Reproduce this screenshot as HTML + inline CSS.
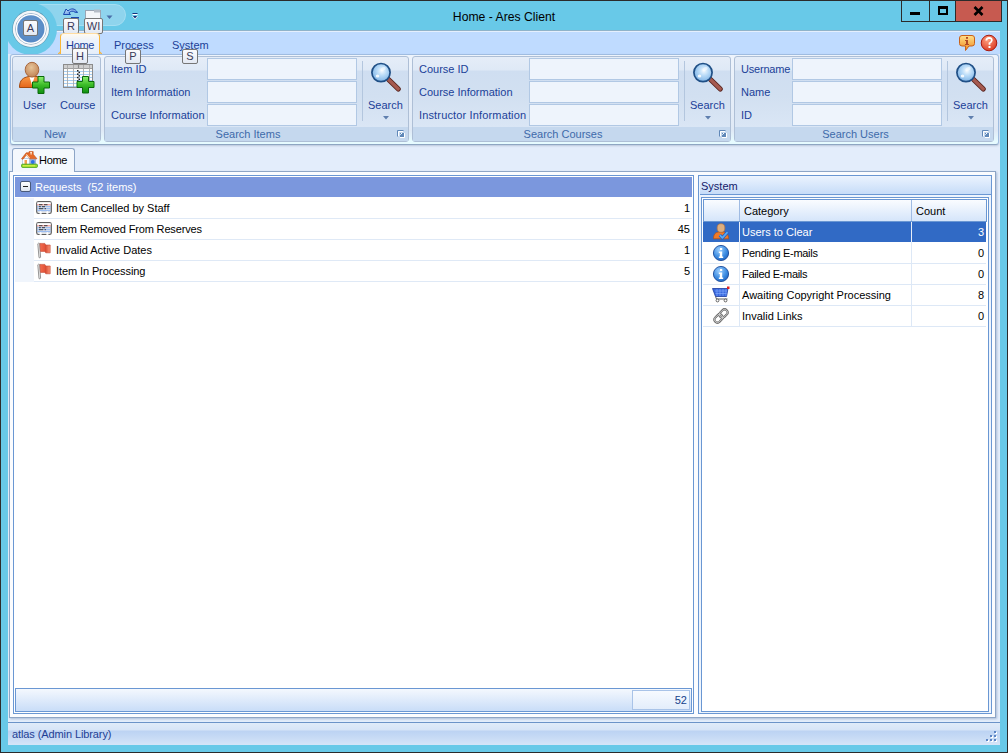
<!DOCTYPE html>
<html><head><meta charset="utf-8">
<style>
*{margin:0;padding:0;box-sizing:border-box}
html,body{width:1008px;height:753px;overflow:hidden;background:#2b2b2b;font-family:"Liberation Sans",sans-serif;font-size:11px;color:#000}
.a{position:absolute}
#frame{left:1px;top:1px;width:1006px;height:751px;background:#68c9e8}
#client{left:8px;top:30px;width:992px;height:715px;background:#e3edfb}
#tabstrip{left:8px;top:30px;width:992px;height:24px;background:#bfdbff;border-top:1px solid #8fb3c9;}
#tabstrip:before{content:"";position:absolute;left:0;top:0;width:100%;height:1px;background:#e4effd}
#ribbon{left:10px;top:54px;width:989px;height:91px;border:1px solid #9fbce0;border-bottom-color:#8ea6c2;border-radius:3px;background:linear-gradient(#eef4fc,#dfe9f6 85%,#e6fbff 97%);box-shadow:0 1px 2px rgba(110,130,160,.35)}
.grp{position:absolute;top:56px;height:86px;border:1px solid #aebfd6;border-radius:3px;background:linear-gradient(#e5edf8 0,#dfe9f6 13px,#cfdef1 14px,#d2e0f1 40px,#dae6f5 70px)}
.cap{position:absolute;left:0;right:0;bottom:0;height:14px;padding-right:17px;background:#c5d8ee;color:#3e6aaa;text-align:center;font-size:11px;line-height:15px}
.rt{position:absolute;color:#1b3f98;font-size:11px;white-space:nowrap}
.tb{position:absolute;height:22px;background:#eef4fc;border:1px solid #b1c8e4}
.tt{position:absolute;color:#1b3f98;font-size:11px}
.key{position:absolute;height:15px;border:1px solid #767676;border-radius:2px;background:linear-gradient(#fbfbfd,#e3e9f3);color:#3a3a58;font-size:11px;text-align:center;line-height:13px}

.doc{position:absolute;left:9px;top:171px;width:987px;height:547px;background:#fbfcfe;border:1px solid #8da5c6;box-shadow:1px 1px 2px rgba(90,115,160,0.4)}
.lt{position:absolute;font-size:11px;color:#000;white-space:nowrap}
.row{position:absolute;left:34px;width:658px;height:21px;border-bottom:1px solid #dfe9f6;background:#fff}
.num{position:absolute;font-size:11px;color:#000;text-align:right;white-space:nowrap}
.gr{position:absolute;left:703px;width:283px;height:21px;border-bottom:1px solid #dde8f6;background:#fff}
</style></head><body>
<div id="frame" class="a"></div>
<div id="client" class="a"></div>
<div id="tabstrip" class="a"></div>
<!-- title -->
<div class="a" style="left:404px;top:10px;width:200px;text-align:center;font-size:12.2px;color:#000">Home - Ares Client</div>
<!-- window buttons -->
<div class="a" style="left:901px;top:1px;width:101px;height:21px;border:1px solid #2b2b2b;border-top:none;background:#68c9e8"></div>
<div class="a" style="left:929px;top:1px;width:1px;height:21px;background:#2b2b2b"></div>
<div class="a" style="left:955px;top:1px;width:47px;height:21px;border:1px solid #2b2b2b;border-top:none;background:#c75a50"></div>
<div class="a" style="left:910px;top:12px;width:10px;height:3px;background:#000"></div>
<div class="a" style="left:938px;top:6px;width:10px;height:9px;border:2px solid #000;border-top-width:3px"></div>
<svg class="a" style="left:973px;top:6px" width="11" height="10" viewBox="0 0 11 10"><path d="M1.5 1 L9.5 9 M9.5 1 L1.5 9" stroke="#000" stroke-width="2.6"/></svg>

<!-- QAT -->
<div class="a" style="left:30px;top:4px;width:96px;height:22px;border-radius:11px;background:#8fd4ed;border:1px solid #a4def2"></div>
<div class="a" style="left:5px;top:3px;width:52px;height:52px;border-radius:50%;background:#68c9e8"></div>
<!-- orb -->
<svg class="a" style="left:0;top:0" width="62" height="60" viewBox="0 0 62 60">
<defs><radialGradient id="orbg" cx="0.5" cy="0.4" r="0.6"><stop offset="0" stop-color="#6a9ad0"/><stop offset="1" stop-color="#5588c4"/></radialGradient></defs>
<circle cx="30.9" cy="28.9" r="18.7" fill="rgba(70,90,110,0.45)"/>
<circle cx="30.9" cy="28.9" r="18.1" fill="#f3f6f9"/>
<circle cx="30.9" cy="28.9" r="15.4" fill="none" stroke="#9fb5cc" stroke-width="1"/>
<circle cx="30.9" cy="28.9" r="14.3" fill="none" stroke="#ffffff" stroke-width="1.2"/>
<circle cx="30.9" cy="28.9" r="13.6" fill="url(#orbg)"/>
</svg>
<div class="key" style="left:23px;top:20px;width:15px;height:16px;line-height:15px;font-size:11px">A</div>
<!-- undo icon -->
<svg class="a" style="left:62px;top:6px" width="18" height="14" viewBox="0 0 18 14">
<defs><linearGradient id="ug" x1="0" y1="0" x2="1" y2="1"><stop offset="0" stop-color="#d8ecff"/><stop offset="1" stop-color="#3a7ad8"/></linearGradient></defs>
<path d="M1.5 8.5 L4 3 L6 5 C9 2 13 2 15.5 6.5 L13 6.2 C11 4.5 8.5 5 7 6.8 L8.5 8.5 Z" fill="url(#ug)" stroke="#1a48b0" stroke-width="1"/>
<rect x="9" y="11" width="8" height="1.6" fill="#1a48b0"/>
</svg>
<!-- save/folder icon -->
<svg class="a" style="left:85px;top:9px" width="17" height="11" viewBox="0 0 17 11"><rect x="0.5" y="1.5" width="15" height="9" fill="#f4f6f9" stroke="#9aa6b5"/><rect x="9" y="0.5" width="6" height="3" fill="#b5bcc6"/></svg>
<svg class="a" style="left:106px;top:15px" width="7" height="5" viewBox="0 0 7 5"><path d="M0.5 0.5 L6.5 0.5 L3.5 4 Z" fill="#4a6ea8"/></svg>
<svg class="a" style="left:132px;top:12px" width="7" height="9" viewBox="0 0 7 9"><rect x="0.5" y="1" width="5" height="1" fill="#14317a"/><rect x="0.5" y="2" width="5" height="1" fill="#fff"/><path d="M0 4 H6 L3 7.5 Z" fill="#fff"/><path d="M0.8 4 H5.2 L3 6.5 Z" fill="#14317a"/></svg>
<div class="key" style="left:63px;top:18px;width:16px;height:16px;line-height:15px;font-size:11px">R</div>
<div class="key" style="left:84px;top:18px;width:19px;height:16px;line-height:15px;font-size:11px">WI</div>
<!-- tabs -->
<div class="a" style="left:60px;top:33px;width:40px;height:21px;border:1px solid #fbb638;border-top-color:#ffdca0;border-bottom:none;border-radius:4px 4px 0 0;background:linear-gradient(#fffaf0,#eef3fb 30%,#e6eef9)"></div>
<div class="a" style="left:58px;top:51px;width:3px;height:3px;border-right:1px solid #fbb638;border-bottom:1px solid #fbb638;border-radius:0 0 3px 0"></div>
<div class="a" style="left:99px;top:51px;width:3px;height:3px;border-left:1px solid #fbb638;border-bottom:1px solid #fbb638;border-radius:0 0 0 3px"></div>
<div class="tt" style="left:66px;top:39px;letter-spacing:-0.3px">Home</div>
<div class="tt" style="left:114px;top:39px">Process</div>
<div class="tt" style="left:172px;top:39px">System</div>
<!-- ribbon -->
<div id="ribbon" class="a"></div>
<div class="grp" style="left:12px;width:89px"><div class="cap" style="padding-right:3px">New</div></div>
<div class="grp" style="left:104px;width:305px"><div class="cap">Search Items</div></div>
<div class="grp" style="left:412px;width:319px"><div class="cap">Search Courses</div></div>
<div class="grp" style="left:734px;width:260px"><div class="cap">Search Users</div></div>
<div class="rt" style="left:23px;top:99px">User</div>
<div class="rt" style="left:60px;top:99px">Course</div>
<div class="rt" style="left:111px;top:63px">Item ID</div>
<div class="rt" style="left:111px;top:86px">Item Information</div>
<div class="rt" style="left:111px;top:109px">Course Information</div>
<div class="tb" style="left:207px;top:58px;width:150px"></div>
<div class="tb" style="left:207px;top:81px;width:150px"></div>
<div class="tb" style="left:207px;top:104px;width:150px"></div>

<div class="rt" style="left:419px;top:63px">Course ID</div>
<div class="rt" style="left:419px;top:86px">Course Information</div>
<div class="rt" style="left:419px;top:109px;letter-spacing:0.15px">Instructor Information</div>
<div class="tb" style="left:529px;top:58px;width:150px"></div>
<div class="tb" style="left:529px;top:81px;width:150px"></div>
<div class="tb" style="left:529px;top:104px;width:150px"></div>

<div class="rt" style="left:741px;top:63px;letter-spacing:-0.2px">Username</div>
<div class="rt" style="left:741px;top:86px">Name</div>
<div class="rt" style="left:741px;top:109px">ID</div>
<div class="tb" style="left:792px;top:58px;width:150px"></div>
<div class="tb" style="left:792px;top:81px;width:150px"></div>
<div class="tb" style="left:792px;top:104px;width:150px"></div>



<div class="a" style="left:362px;top:61px;width:1px;height:60px;background:#b3c6de"></div>
<svg class="a" style="left:370px;top:61px" width="34" height="34" viewBox="0 0 34 34">
<defs><radialGradient id="lg362" cx="0.55" cy="0.4" r="0.75"><stop offset="0" stop-color="#f4faff"/><stop offset="0.35" stop-color="#b9dbf8"/><stop offset="0.8" stop-color="#7fb4e6"/><stop offset="1" stop-color="#5f98d6"/></radialGradient></defs>
<line x1="18.5" y1="18.5" x2="28.3" y2="28" stroke="#5a2620" stroke-width="5.2" stroke-linecap="round"/>
<line x1="18.5" y1="18.5" x2="28.3" y2="28" stroke="#a65a50" stroke-width="3.2" stroke-linecap="round"/>
<circle cx="11" cy="11.6" r="9.1" fill="url(#lg362)" stroke="#1f4f86" stroke-width="1.7"/>
<ellipse cx="7.5" cy="15" rx="1.8" ry="1.5" fill="#fff" opacity="0.85"/>
<ellipse cx="13" cy="8" rx="3" ry="1.8" fill="#fff" opacity="0.5" transform="rotate(-30 13 8)"/>
</svg>
<div class="rt" style="left:368px;top:99px">Search</div>
<svg class="a" style="left:383px;top:116px" width="6" height="4" viewBox="0 0 6 4"><path d="M0 0 L6 0 L3 3.5 Z" fill="#5f7fae"/></svg>

<div class="a" style="left:684px;top:61px;width:1px;height:60px;background:#b3c6de"></div>
<svg class="a" style="left:692px;top:61px" width="34" height="34" viewBox="0 0 34 34">
<defs><radialGradient id="lg684" cx="0.55" cy="0.4" r="0.75"><stop offset="0" stop-color="#f4faff"/><stop offset="0.35" stop-color="#b9dbf8"/><stop offset="0.8" stop-color="#7fb4e6"/><stop offset="1" stop-color="#5f98d6"/></radialGradient></defs>
<line x1="18.5" y1="18.5" x2="28.3" y2="28" stroke="#5a2620" stroke-width="5.2" stroke-linecap="round"/>
<line x1="18.5" y1="18.5" x2="28.3" y2="28" stroke="#a65a50" stroke-width="3.2" stroke-linecap="round"/>
<circle cx="11" cy="11.6" r="9.1" fill="url(#lg684)" stroke="#1f4f86" stroke-width="1.7"/>
<ellipse cx="7.5" cy="15" rx="1.8" ry="1.5" fill="#fff" opacity="0.85"/>
<ellipse cx="13" cy="8" rx="3" ry="1.8" fill="#fff" opacity="0.5" transform="rotate(-30 13 8)"/>
</svg>
<div class="rt" style="left:690px;top:99px">Search</div>
<svg class="a" style="left:705px;top:116px" width="6" height="4" viewBox="0 0 6 4"><path d="M0 0 L6 0 L3 3.5 Z" fill="#5f7fae"/></svg>

<div class="a" style="left:947px;top:61px;width:1px;height:60px;background:#b3c6de"></div>
<svg class="a" style="left:955px;top:61px" width="34" height="34" viewBox="0 0 34 34">
<defs><radialGradient id="lg947" cx="0.55" cy="0.4" r="0.75"><stop offset="0" stop-color="#f4faff"/><stop offset="0.35" stop-color="#b9dbf8"/><stop offset="0.8" stop-color="#7fb4e6"/><stop offset="1" stop-color="#5f98d6"/></radialGradient></defs>
<line x1="18.5" y1="18.5" x2="28.3" y2="28" stroke="#5a2620" stroke-width="5.2" stroke-linecap="round"/>
<line x1="18.5" y1="18.5" x2="28.3" y2="28" stroke="#a65a50" stroke-width="3.2" stroke-linecap="round"/>
<circle cx="11" cy="11.6" r="9.1" fill="url(#lg947)" stroke="#1f4f86" stroke-width="1.7"/>
<ellipse cx="7.5" cy="15" rx="1.8" ry="1.5" fill="#fff" opacity="0.85"/>
<ellipse cx="13" cy="8" rx="3" ry="1.8" fill="#fff" opacity="0.5" transform="rotate(-30 13 8)"/>
</svg>
<div class="rt" style="left:953px;top:99px">Search</div>
<svg class="a" style="left:968px;top:116px" width="6" height="4" viewBox="0 0 6 4"><path d="M0 0 L6 0 L3 3.5 Z" fill="#5f7fae"/></svg>
<svg class="a" style="left:397px;top:130px" width="10" height="10" viewBox="0 0 10 10"><path d="M0.5 6.5 V0.5 H6.5" fill="none" stroke="#6088b8"/><path d="M1.5 6 V1.5 H6" fill="none" stroke="#fff"/><rect x="3" y="3" width="4" height="4" fill="#6088b8"/><rect x="4" y="3" width="1" height="1" fill="#fff"/><rect x="3" y="4" width="1" height="1" fill="#c8dcf0"/><path d="M7.5 3 V7.5 H3" fill="none" stroke="#fff"/></svg><svg class="a" style="left:719px;top:130px" width="10" height="10" viewBox="0 0 10 10"><path d="M0.5 6.5 V0.5 H6.5" fill="none" stroke="#6088b8"/><path d="M1.5 6 V1.5 H6" fill="none" stroke="#fff"/><rect x="3" y="3" width="4" height="4" fill="#6088b8"/><rect x="4" y="3" width="1" height="1" fill="#fff"/><rect x="3" y="4" width="1" height="1" fill="#c8dcf0"/><path d="M7.5 3 V7.5 H3" fill="none" stroke="#fff"/></svg><svg class="a" style="left:982px;top:130px" width="10" height="10" viewBox="0 0 10 10"><path d="M0.5 6.5 V0.5 H6.5" fill="none" stroke="#6088b8"/><path d="M1.5 6 V1.5 H6" fill="none" stroke="#fff"/><rect x="3" y="3" width="4" height="4" fill="#6088b8"/><rect x="4" y="3" width="1" height="1" fill="#fff"/><rect x="3" y="4" width="1" height="1" fill="#c8dcf0"/><path d="M7.5 3 V7.5 H3" fill="none" stroke="#fff"/></svg>
<!-- user icon -->
<svg class="a" style="left:18px;top:61px" width="34" height="33" viewBox="0 0 34 33">
<defs><radialGradient id="hd" cx="0.45" cy="0.35" r="0.7"><stop offset="0" stop-color="#e6c49a"/><stop offset="1" stop-color="#c08050"/></radialGradient>
<linearGradient id="bd" x1="0" y1="0" x2="0" y2="1"><stop offset="0" stop-color="#f89a48"/><stop offset="1" stop-color="#e5661a"/></linearGradient>
<linearGradient id="gp" x1="0" y1="0" x2="0" y2="1"><stop offset="0" stop-color="#8ef070"/><stop offset="0.5" stop-color="#3cbc28"/><stop offset="1" stop-color="#0e9010"/></linearGradient></defs>
<path d="M1.5 26.5 C1.5 19 5 16.5 11 15.5 L19 15.5 C23 17 24 20 24 26.5 Z" fill="url(#bd)" stroke="#a54a10" stroke-width="1"/>
<path d="M11.5 16 L14 24 L16.5 16 Z" fill="#fff"/>
<ellipse cx="14" cy="8.7" rx="6.8" ry="7.4" fill="url(#hd)" stroke="#a86840" stroke-width="1"/>
<path d="M20 15.5 h6 v5.5 h5.5 v6 h-5.5 v5.5 h-6 v-5.5 h-5.5 v-6 h5.5 Z" fill="url(#gp)" stroke="#0a6a0a" stroke-width="1"/>
</svg>
<!-- course icon -->
<svg class="a" style="left:63px;top:64px" width="32" height="30" viewBox="0 0 32 30">
<rect x="0.5" y="0.5" width="29" height="23" fill="#fdfcfa" stroke="#8c8c8c"/>
<rect x="1" y="1" width="28" height="3.2" fill="#cfcfcf"/>
<path d="M1 4.5 H29" stroke="#8a8a8a" stroke-width="0.8"/>
<path d="M1 7.5 H29 M1 10.5 H29 M1 13.5 H29 M1 16.5 H29 M1 19.5 H29 M1 22.5 H29" stroke="#9cc8f0" stroke-width="0.9"/>
<path d="M4.5 1 V23 M10.5 1 V23 M20.5 1 V23 M26.5 1 V23" stroke="#a8a8a8" stroke-width="0.9"/>
<path d="M15.5 1 V4" stroke="#8a8a8a" stroke-width="1.2"/>
<rect x="14" y="6.0" width="1.5" height="1.5" fill="#202020"/><rect x="15.5" y="7.7" width="1.5" height="1.5" fill="#202020"/><rect x="14" y="9.4" width="1.5" height="1.5" fill="#202020"/><rect x="15.5" y="11.1" width="1.5" height="1.5" fill="#202020"/><rect x="14" y="12.8" width="1.5" height="1.5" fill="#202020"/><rect x="15.5" y="14.5" width="1.5" height="1.5" fill="#202020"/><rect x="14" y="16.2" width="1.5" height="1.5" fill="#202020"/><rect x="15.5" y="17.9" width="1.5" height="1.5" fill="#202020"/><rect x="14" y="19.6" width="1.5" height="1.5" fill="#202020"/><rect x="15.5" y="21.3" width="1.5" height="1.5" fill="#202020"/>
<path d="M19.5 12.5 h6 v5 h5.5 v6 h-5.5 v5.5 h-6 v-5.5 h-5.5 v-6 h5.5 Z" fill="url(#gp)" stroke="#0a6a0a" stroke-width="1"/>
</svg>
<div class="key" style="left:72px;top:48px;width:16px;height:16px;line-height:14px">H</div>
<div class="key" style="left:125px;top:49px;width:16px;height:15px;line-height:13px">P</div>
<div class="key" style="left:182px;top:49px;width:16px;height:15px;line-height:13px">S</div>
<!-- info & help -->
<svg class="a" style="left:957px;top:34px" width="19" height="19" viewBox="0 0 19 19">
<defs><linearGradient id="ib" x1="0" y1="0" x2="0" y2="1"><stop offset="0" stop-color="#ffe08a"/><stop offset="1" stop-color="#f08a20"/></linearGradient></defs>
<path d="M5 1.5 H15 Q17.5 1.5 17.5 4 V9.5 Q17.5 12 15 12 H12 L8.5 16.5 L8.5 12 H5 Q2.5 12 2.5 9.5 V4 Q2.5 1.5 5 1.5 Z" fill="url(#ib)" stroke="#c8601a" stroke-width="1"/>
<rect x="9" y="3" width="2" height="1.8" fill="#b04a28"/><path d="M8 6 H11 V10 H12 V11 H8 V10 H9 V7 H8 Z" fill="#b04a28"/>
</svg>
<svg class="a" style="left:980px;top:34px" width="18" height="18" viewBox="0 0 18 18">
<defs><radialGradient id="hb" cx="0.4" cy="0.3" r="0.8"><stop offset="0" stop-color="#ffa080"/><stop offset="1" stop-color="#d8301a"/></radialGradient></defs>
<circle cx="9" cy="9" r="7.8" fill="url(#hb)" stroke="#a81a10" stroke-width="1"/>
<path d="M6.3 6.5 Q6.5 3.8 9.2 3.8 Q12 3.9 11.8 6.5 Q11.6 8 9.5 9.2 V10.8" fill="none" stroke="#fff" stroke-width="1.8"/>
<rect x="8.5" y="12" width="2" height="2" fill="#fff"/>
</svg>
<!-- status bar -->
<div class="a" style="left:8px;top:722px;width:992px;height:1px;background:#6b93c8"></div>
<div class="a" style="left:8px;top:723px;width:992px;height:22px;background:linear-gradient(#e0ebf9 0,#d6e4f7 7px,#bcd3f3 8px,#c6daf5 14px,#d6e5f8 22px)"></div>
<div class="lt" style="left:12px;top:728px;color:#1f3f94;letter-spacing:-0.1px">atlas (Admin Library)</div>
<div class="a" style="left:995px;top:732px;width:2px;height:2px;background:#fff"></div><div class="a" style="left:994px;top:731px;width:2px;height:2px;background:#5b84c4"></div><div class="a" style="left:991px;top:736px;width:2px;height:2px;background:#fff"></div><div class="a" style="left:990px;top:735px;width:2px;height:2px;background:#5b84c4"></div><div class="a" style="left:995px;top:736px;width:2px;height:2px;background:#fff"></div><div class="a" style="left:994px;top:735px;width:2px;height:2px;background:#5b84c4"></div><div class="a" style="left:987px;top:740px;width:2px;height:2px;background:#fff"></div><div class="a" style="left:986px;top:739px;width:2px;height:2px;background:#5b84c4"></div><div class="a" style="left:991px;top:740px;width:2px;height:2px;background:#fff"></div><div class="a" style="left:990px;top:739px;width:2px;height:2px;background:#5b84c4"></div><div class="a" style="left:995px;top:740px;width:2px;height:2px;background:#fff"></div><div class="a" style="left:994px;top:739px;width:2px;height:2px;background:#5b84c4"></div>
<!-- doc tab page -->
<div class="doc"></div>
<div class="a" style="left:12px;top:148px;width:63px;height:24px;border:1px solid #8da5c6;border-bottom:none;border-radius:3px 3px 0 0;background:#f4f8fd"></div>
<div class="lt" style="left:39px;top:154px;letter-spacing:-0.3px">Home</div>
<!-- left panel -->
<div class="a" style="left:13px;top:175px;width:681px;height:539px;border:1px solid #6a97d3;background:#fff"></div>
<div class="a" style="left:15px;top:177px;width:677px;height:20px;background:#7b97dd"></div>
<div class="a" style="left:15px;top:198px;width:19px;height:84px;background:#f0f5fc"></div>
<div class="a" style="left:20px;top:181px;width:11px;height:11px;border:1px solid #4a5a7a;border-radius:2px;background:linear-gradient(#fff,#dde4ef)"></div>
<div class="a" style="left:23px;top:186px;width:5px;height:1px;background:#222"></div>
<div class="lt" style="left:35px;top:181px;color:#fff">Requests&nbsp; (52 items)</div>
<div class="row" style="top:198px"></div>
<div class="row" style="top:219px"></div>
<div class="row" style="top:240px"></div>
<div class="row" style="top:261px"></div>
<div class="lt" style="left:56px;top:202px">Item Cancelled by Staff</div>
<div class="lt" style="left:56px;top:223px;letter-spacing:-0.15px">Item Removed From Reserves</div>
<div class="lt" style="left:56px;top:244px">Invalid Active Dates</div>
<div class="lt" style="left:56px;top:265px;letter-spacing:-0.1px">Item In Processing</div>
<div class="num" style="left:640px;width:50px;top:202px">1</div>
<div class="num" style="left:640px;width:50px;top:223px">45</div>
<div class="num" style="left:640px;width:50px;top:244px">1</div>
<div class="num" style="left:640px;width:50px;top:265px">5</div>
<!-- left footer -->
<div class="a" style="left:15px;top:688px;width:677px;height:24px;border:1px solid #6a97d3;background:linear-gradient(#f4f8fe,#c9ddf8)"></div>
<div class="a" style="left:632px;top:690px;width:58px;height:20px;border:1px solid #a9c3e8;background:linear-gradient(#f7faff,#e3edfb)"></div>
<div class="num" style="left:632px;width:55px;top:694px;color:#15428b">52</div>
<!-- right panel -->
<div class="a" style="left:698px;top:175px;width:294px;height:539px;border:1px solid #6a97d3;background:#edf4fd"></div>
<div class="a" style="left:700px;top:177px;width:291px;height:18px;background:linear-gradient(#e9f2fe,#c6dcf8);border-bottom:1px solid #6a97d3"></div>
<div class="lt" style="left:701px;top:180px;color:#14206a">System</div>
<div class="a" style="left:701px;top:197px;width:288px;height:515px;border:1px solid #6a97d3;background:#fff"></div>
<div class="a" style="left:703px;top:199px;width:284px;height:23px;background:linear-gradient(#fafcff,#d5e5fa);border:1px solid #6a97d3;border-bottom:1px solid #6a97d3"></div>
<div class="lt" style="left:744px;top:205px">Category</div>
<div class="lt" style="left:916px;top:205px">Count</div>
<div class="gr" style="top:222px;background:#316ac5;border-bottom:none;height:20px"></div>
<div class="gr" style="top:243px"></div>
<div class="gr" style="top:264px"></div>
<div class="gr" style="top:285px"></div>
<div class="gr" style="top:306px"></div>
<div class="a" style="left:739px;top:200px;width:1px;height:21px;background:#9fbbe3"></div>
<div class="a" style="left:911px;top:200px;width:1px;height:21px;background:#9fbbe3"></div>
<div class="a" style="left:739px;top:222px;width:1px;height:105px;background:#dde8f6"></div>
<div class="a" style="left:911px;top:222px;width:1px;height:105px;background:#dde8f6"></div>
<div class="a" style="left:739px;top:222px;width:1px;height:20px;background:#e8eef8"></div>
<div class="a" style="left:911px;top:222px;width:1px;height:20px;background:#e8eef8"></div>
<div class="lt" style="left:742px;top:226px;color:#fff">Users to Clear</div>
<div class="lt" style="left:742px;top:247px;letter-spacing:-0.3px">Pending E-mails</div>
<div class="lt" style="left:742px;top:268px;letter-spacing:-0.33px">Failed E-mails</div>
<div class="lt" style="left:742px;top:289px">Awaiting Copyright Processing</div>
<div class="lt" style="left:742px;top:310px">Invalid Links</div>
<div class="num" style="left:930px;width:54px;top:226px;color:#fff">3</div>
<div class="num" style="left:930px;width:54px;top:247px">0</div>
<div class="num" style="left:930px;width:54px;top:268px">0</div>
<div class="num" style="left:930px;width:54px;top:289px">8</div>
<div class="num" style="left:930px;width:54px;top:310px">0</div>

<!-- list icons -->
<svg class="a" style="left:36px;top:201px" width="16" height="14" viewBox="0 0 16 14">
<rect x="0.7" y="0.7" width="14.6" height="11.8" rx="1.8" fill="#e6e6e6" stroke="#5e5e5e" stroke-width="1.2"/>
<rect x="1.3" y="1.3" width="13.4" height="1.8" fill="#fff"/>
<rect x="1.3" y="3.2" width="13.4" height="1" fill="#ff9c9c"/>
<rect x="1.3" y="5.2" width="13.4" height="1" fill="#8ab4f4"/>
<rect x="1.3" y="7.2" width="13.4" height="1" fill="#8ab4f4"/>
<rect x="1.3" y="9.2" width="13.4" height="1" fill="#8ab4f4"/>
<path d="M3 3.7 H6.5 M8 3.7 H11.5 M3 5.7 H4.8 M6 5.7 H9 M3 7.7 H7.2 M8.6 7.7 H10" stroke="#3a3a3a" stroke-width="1"/>
<path d="M4 12.8 V10.8 H5.2 V12.8 M10.8 12.8 V10.8 H12 V12.8" fill="#fff" stroke="#fff" stroke-width="0.9"/>
</svg><svg class="a" style="left:36px;top:222px" width="16" height="14" viewBox="0 0 16 14">
<rect x="0.7" y="0.7" width="14.6" height="11.8" rx="1.8" fill="#e6e6e6" stroke="#5e5e5e" stroke-width="1.2"/>
<rect x="1.3" y="1.3" width="13.4" height="1.8" fill="#fff"/>
<rect x="1.3" y="3.2" width="13.4" height="1" fill="#ff9c9c"/>
<rect x="1.3" y="5.2" width="13.4" height="1" fill="#8ab4f4"/>
<rect x="1.3" y="7.2" width="13.4" height="1" fill="#8ab4f4"/>
<rect x="1.3" y="9.2" width="13.4" height="1" fill="#8ab4f4"/>
<path d="M3 3.7 H6.5 M8 3.7 H11.5 M3 5.7 H4.8 M6 5.7 H9 M3 7.7 H7.2 M8.6 7.7 H10" stroke="#3a3a3a" stroke-width="1"/>
<path d="M4 12.8 V10.8 H5.2 V12.8 M10.8 12.8 V10.8 H12 V12.8" fill="#fff" stroke="#fff" stroke-width="0.9"/>
</svg><svg class="a" style="left:36px;top:242px" width="16" height="17" viewBox="0 0 16 17">
<defs><linearGradient id="fl242" x1="0" y1="0" x2="1" y2="0"><stop offset="0" stop-color="#f46a4c"/><stop offset="0.45" stop-color="#e4563c"/><stop offset="0.55" stop-color="#d84c34"/><stop offset="1" stop-color="#fb9678"/></linearGradient></defs>
<path d="M1.8 1.8 Q2.4 0.8 3.6 1.4 L4.6 15.2 Q4 16.4 3 15.6 Z" fill="#f2f2f2" stroke="#8a8a8a" stroke-width="0.9"/>
<path d="M4 1.4 H8.8 L9.8 3 H14.2 V10.8 H9.8 L8.8 9.4 H4.5 Z" fill="url(#fl242)" stroke="#c24a34" stroke-width="0.6"/>
</svg><svg class="a" style="left:36px;top:263px" width="16" height="17" viewBox="0 0 16 17">
<defs><linearGradient id="fl263" x1="0" y1="0" x2="1" y2="0"><stop offset="0" stop-color="#f46a4c"/><stop offset="0.45" stop-color="#e4563c"/><stop offset="0.55" stop-color="#d84c34"/><stop offset="1" stop-color="#fb9678"/></linearGradient></defs>
<path d="M1.8 1.8 Q2.4 0.8 3.6 1.4 L4.6 15.2 Q4 16.4 3 15.6 Z" fill="#f2f2f2" stroke="#8a8a8a" stroke-width="0.9"/>
<path d="M4 1.4 H8.8 L9.8 3 H14.2 V10.8 H9.8 L8.8 9.4 H4.5 Z" fill="url(#fl263)" stroke="#c24a34" stroke-width="0.6"/>
</svg>
<!-- house icon -->
<svg class="a" style="left:21px;top:151px" width="17" height="17" viewBox="0 0 17 17">
<rect x="1.5" y="7.5" width="7" height="6" fill="#fbfdff" stroke="#a8bcd8" stroke-width="0.7"/>
<rect x="8.5" y="7.5" width="6.5" height="6" fill="#9db4dc"/>
<rect x="3.5" y="9" width="2.5" height="5" fill="#f0a050"/>
<circle cx="11.8" cy="11" r="1.9" fill="#2a72e8"/>
<path d="M0.5 7.8 L5.2 1.8 L8 1.8 L8 0.6 L12.2 0.6 L12.2 3.2 L16 7.8 L9 7.8 L5.5 3.8 L2 8.3 Z" fill="#e66a28" stroke="#c0501a" stroke-width="0.6"/>
<path d="M5.4 3.2 L8.6 7" stroke="#ffd6a8" stroke-width="1"/>
<path d="M9.2 1.6 H11 M10.1 1.6 V3.6" stroke="#fff2e0" stroke-width="1"/>
<rect x="0.6" y="13.2" width="15.8" height="3.2" rx="0.8" fill="#9ee030" stroke="#3a9a10" stroke-width="0.8"/>
<path d="M2 14.8 H14" stroke="#e8f850" stroke-width="0.9"/>
</svg>
<!-- system grid icons -->
<svg class="a" style="left:712px;top:222px" width="18" height="18" viewBox="0 0 18 18">
<path d="M1.5 16.8 C1.5 12 3.5 10.5 6.5 10 L12 10 C15 10.6 16.5 12.5 16.5 16.8 Z" fill="#f07a28" stroke="#b0500e" stroke-width="0.7"/>
<ellipse cx="9" cy="6" rx="3.9" ry="4.3" fill="#dcae80" stroke="#b07040" stroke-width="0.7"/>
<path d="M7.8 13.2 L10.4 15.8 L15.5 10.2" fill="none" stroke="#1a5ac8" stroke-width="3.2" stroke-linejoin="round"/>
<path d="M7.8 13.2 L10.4 15.8 L15.5 10.2" fill="none" stroke="#5aaaf0" stroke-width="1.8" stroke-linejoin="round"/>
</svg>
<svg class="a" style="left:712px;top:244px" width="18" height="18" viewBox="0 0 18 18">
<defs><radialGradient id="inf" cx="0.4" cy="0.3" r="0.8"><stop offset="0" stop-color="#9ed0ff"/><stop offset="0.6" stop-color="#3a8ae0"/><stop offset="1" stop-color="#1a5ab8"/></radialGradient></defs>
<circle cx="9" cy="9" r="7.6" fill="url(#inf)" stroke="#1a4a9a" stroke-width="0.9"/>
<rect x="8" y="4" width="2.2" height="2" fill="#fff"/><path d="M6.8 7.5 H10.2 V12.5 H11.2 V14 H6.8 V12.5 H7.8 V9 H6.8 Z" fill="#fff"/>
</svg>
<svg class="a" style="left:712px;top:265px" width="18" height="18" viewBox="0 0 18 18">
<circle cx="9" cy="9" r="7.6" fill="url(#inf)" stroke="#1a4a9a" stroke-width="0.9"/>
<rect x="8" y="4" width="2.2" height="2" fill="#fff"/><path d="M6.8 7.5 H10.2 V12.5 H11.2 V14 H6.8 V12.5 H7.8 V9 H6.8 Z" fill="#fff"/>
</svg>
<svg class="a" style="left:712px;top:286px" width="18" height="18" viewBox="0 0 18 18">
<path d="M0.5 2.5 H16 L14.5 10.5 H3.5 Z" fill="#3a6ae0" stroke="#1a3aa0" stroke-width="0.8"/>
<path d="M3 5 H15 M3.5 7.5 H14.5 M5 3 V10 M8 3 V10 M11 3 V10 M14 3 V10" stroke="#8ab0ff" stroke-width="0.6"/>
<path d="M3.5 10.5 L4.5 13 H15.5" fill="none" stroke="#505050" stroke-width="0.9"/>
<circle cx="5.5" cy="14.5" r="1.4" fill="#fff" stroke="#404040" stroke-width="0.8"/><circle cx="13.5" cy="14.5" r="1.4" fill="#fff" stroke="#404040" stroke-width="0.8"/>
<rect x="15" y="0.5" width="2.5" height="2.5" fill="#e02020"/>
</svg>
<svg class="a" style="left:712px;top:307px" width="18" height="18" viewBox="0 0 18 18">
<g transform="rotate(-45 9 9)">
<rect x="1" y="6" width="9" height="6" rx="3" fill="none" stroke="#606060" stroke-width="2.2"/>
<rect x="8" y="6" width="9" height="6" rx="3" fill="none" stroke="#606060" stroke-width="2.2"/>
<rect x="1" y="6" width="9" height="6" rx="3" fill="none" stroke="#e8e8e8" stroke-width="0.8"/>
<rect x="8" y="6" width="9" height="6" rx="3" fill="none" stroke="#e8e8e8" stroke-width="0.8"/>
</g>
</svg>
</body></html>
